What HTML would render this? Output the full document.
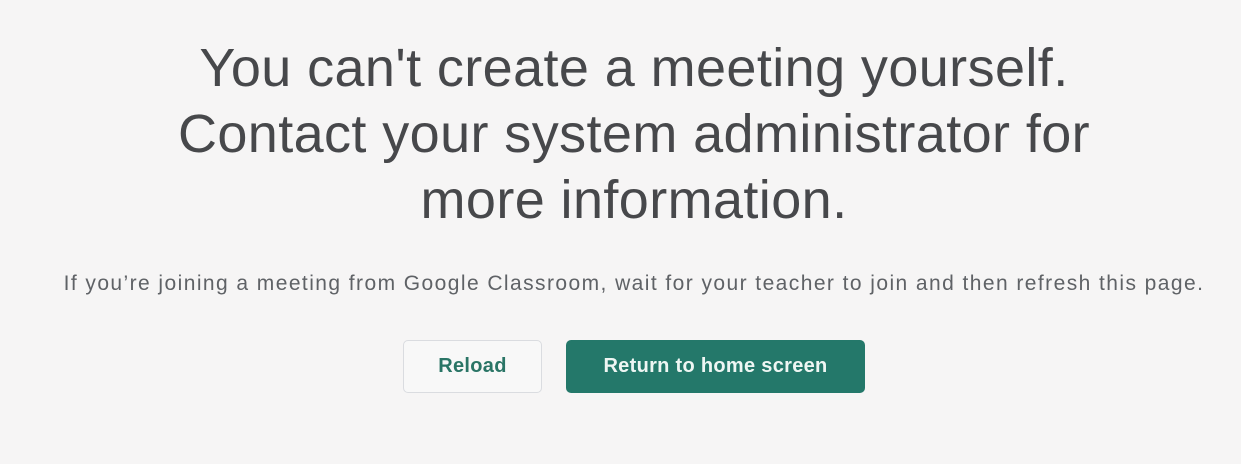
<!DOCTYPE html>
<html><head><style>
html,body{margin:0;padding:0;width:1241px;height:464px;background:#f6f5f5;overflow:hidden;font-family:"Liberation Sans",sans-serif;}
h1{position:absolute;left:0;width:1268px;top:35px;margin:0;text-align:center;font-weight:400;font-size:54px;letter-spacing:0.4px;line-height:66px;color:#47484b;}
p{position:absolute;left:0;width:1268px;top:272px;margin:0;text-align:center;font-size:21px;letter-spacing:1.43px;color:#5f6266;}
.b{position:absolute;top:340px;height:53px;box-sizing:border-box;border-radius:5px;font-size:20px;font-weight:bold;letter-spacing:0.3px;display:flex;align-items:center;justify-content:center;}
.r{left:403px;width:139px;border:1px solid #dadce0;background:#f8f8f8;color:#2a7566;}
.h{left:566px;width:299px;background:#24786a;color:#eef6f3;}
</style></head><body>
<h1>You can't create a meeting yourself.<br>Contact your system administrator for<br>more information.</h1>
<p>If you’re joining a meeting from Google Classroom, wait for your teacher to join and then refresh this page.</p>
<div class="b r">Reload</div>
<div class="b h">Return to home screen</div>
</body></html>
